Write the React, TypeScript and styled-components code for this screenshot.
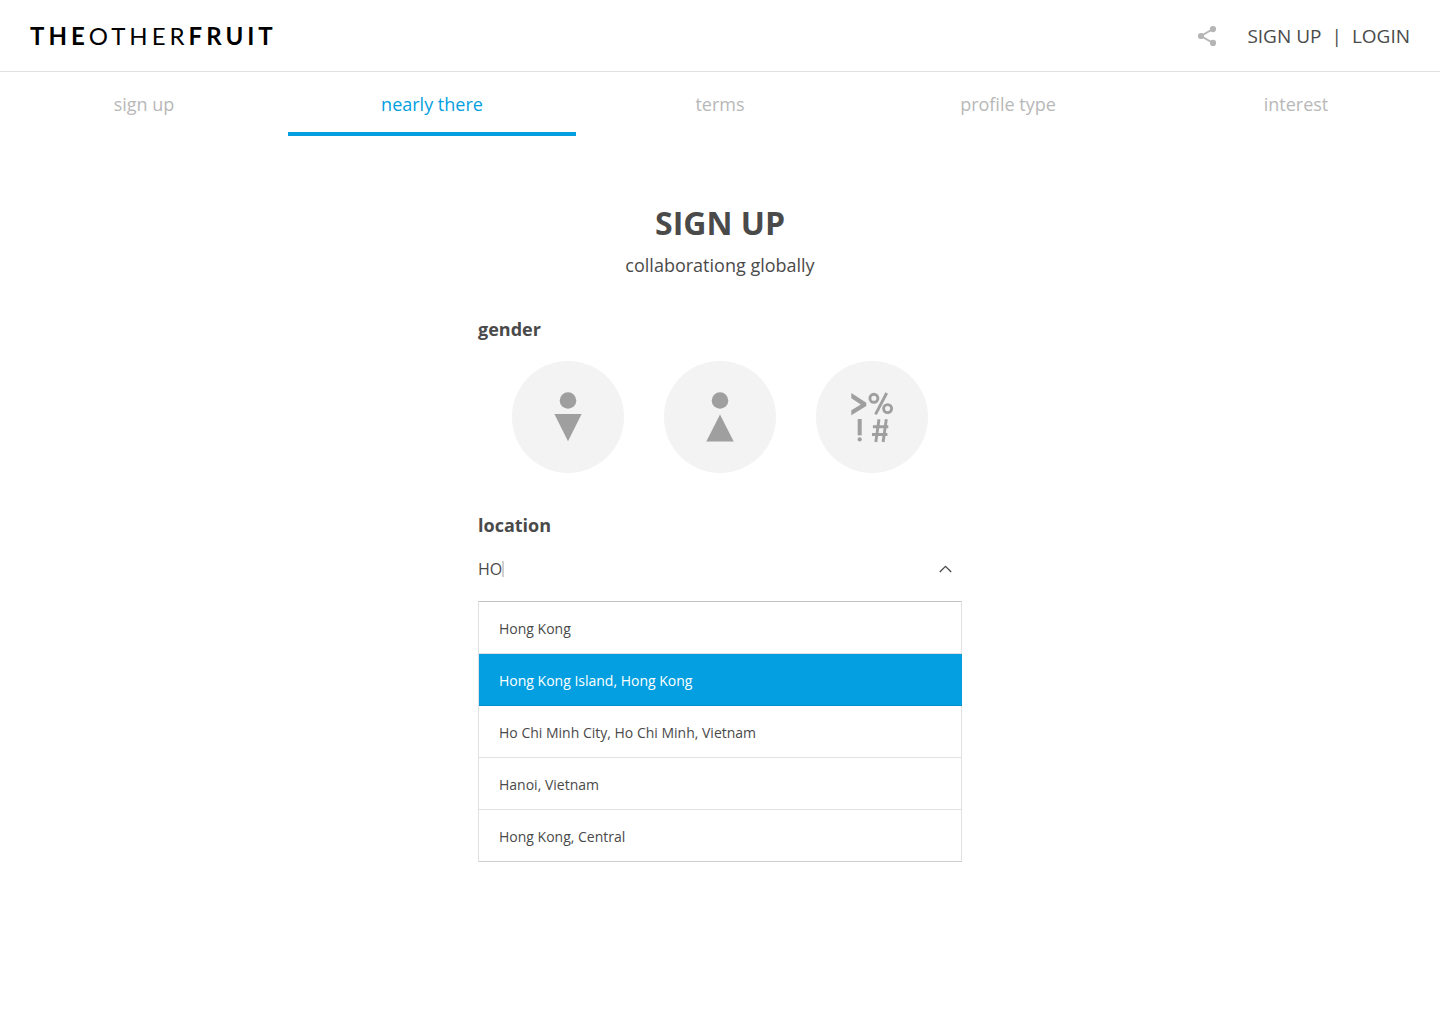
import React, { useState } from "react";
import styled, { createGlobalStyle, css } from "styled-components";

const color = {
  text: "#4a4a4a",
  muted: "#b8b8b8",
  accent: "#039fe1",
  line: "#e1e1e1",
  lineStrong: "#c2c2c2",
  disc: "#f3f3f3",
  glyph: "#9f9f9f",
};

const GlobalStyle = createGlobalStyle`
  * { box-sizing: border-box; }
  body {
    margin: 0;
    background: #fff;
    color: ${color.text};
    font-family: "Open Sans", "Noto Sans", sans-serif;
    font-size: 18px;
    line-height: 24px;
  }
`;

const Header = styled.header`
  display: flex;
  align-items: center;
  justify-content: space-between;
  height: 72px;
  padding: 0 30px;
  border-bottom: 1px solid ${color.line};
`;

const Logo = styled.a`
  color: #000;
  font-family: Lato, "Open Sans", sans-serif;
  font-size: 24px;
  font-weight: 400;
  letter-spacing: 4px;
  text-decoration: none;
`;

const LogoStrong = styled.span`
  font-weight: 700;
`;

const Account = styled.nav`
  display: flex;
  align-items: center;
  font-size: 19px;
`;

const ShareButton = styled.button`
  display: flex;
  margin: 0 30px 0 0;
  padding: 0;
  border: 0;
  background: none;
  cursor: pointer;
`;

const AccountLink = styled.a`
  color: ${color.text};
  text-decoration: none;
`;

const Divider = styled.span`
  padding: 0 10px;
`;

const Steps = styled.nav`
  display: grid;
  grid-template-columns: repeat(5, 1fr);
`;

const Step = styled.a<{ $active: boolean }>`
  height: 64px;
  padding-top: 20px;
  border-bottom: 4px solid ${(p) => (p.$active ? color.accent : "transparent")};
  color: ${(p) => (p.$active ? color.accent : color.muted)};
  text-align: center;
  text-decoration: none;
`;

const Form = styled.form`
  width: 100%;
  max-width: 484px;
  margin: 0 auto;
  padding: 64px 0;
`;

const Title = styled.h1`
  margin: 0;
  font-size: 32px;
  font-weight: 700;
  line-height: 45px;
  text-align: center;
`;

const Subtitle = styled.p`
  margin: 8px 0 40px;
  text-align: center;
`;

const heading = css`
  display: block;
  padding: 0;
  font-size: 18px;
  font-weight: 700;
  line-height: 24px;
`;

const Genders = styled.fieldset`
  margin: 0 0 40px;
  padding: 0;
  border: 0;
`;

const Legend = styled.legend`
  ${heading}
`;

const GenderRow = styled.div`
  display: flex;
  justify-content: center;
  gap: 40px;
  padding-top: 20px;
`;

const GenderOption = styled.label`
  display: grid;
  width: 112px;
  height: 112px;
  border-radius: 50%;
  background: ${color.disc};
  cursor: pointer;

  & > * {
    grid-area: 1 / 1;
  }

  &:has(:checked) {
    box-shadow: inset 0 0 0 2px ${color.accent};
  }
`;

const Radio = styled.input`
  width: 100%;
  height: 100%;
  margin: 0;
  appearance: none;
  border-radius: 50%;
  cursor: pointer;
`;

const GenderIcon = styled.svg`
  width: 112px;
  height: 112px;
  pointer-events: none;
`;

const LocationLabel = styled.label`
  ${heading}
`;

const Field = styled.div`
  display: flex;
  align-items: center;
  height: 64px;
  padding-right: 10px;
`;

const LocationInput = styled.input`
  field-sizing: content;
  min-width: 0;
  padding: 0;
  border: 0;
  outline: 0;
  background: none;
  color: ${color.text};
  font: 16px/24px "Open Sans", "Noto Sans", sans-serif;
`;

const Caret = styled.span`
  width: 2px;
  height: 16px;
  background: #d0d0d0;
`;

const ToggleButton = styled.button`
  display: flex;
  margin: 0 0 0 auto;
  padding: 0;
  border: 0;
  background: none;
  cursor: pointer;
`;

const Options = styled.ul`
  margin: 0;
  padding: 0;
  border: solid ${color.line};
  border-width: 1px 1px 0;
  border-top-color: ${color.lineStrong};
  list-style: none;
`;

const Option = styled.li<{ $active: boolean }>`
  height: 52px;
  margin-right: -1px;
  padding: 15px 20px 0;
  border-bottom: 1px solid ${(p) => (p.$active ? "#0490cb" : color.line)};
  background: ${(p) => (p.$active ? color.accent : "transparent")};
  color: ${(p) => (p.$active ? "#fff" : color.text)};
  font-size: 14px;
  cursor: pointer;

  &:last-child {
    border-bottom-color: #cdcdcd;
  }
`;

const steps = ["sign up", "nearly there", "terms", "profile type", "interest"];

const places = [
  "Hong Kong",
  "Hong Kong Island, Hong Kong",
  "Ho Chi Minh City, Ho Chi Minh, Vietnam",
  "Hanoi, Vietnam",
  "Hong Kong, Central",
];

const genders = [
  {
    name: "male",
    icon: (
      <g fill={color.glyph}>
        <circle cx="56" cy="39.5" r="8.3" />
        <path d="M42.4 53H69.6L56 80.3Z" />
      </g>
    ),
  },
  {
    name: "female",
    icon: (
      <g fill={color.glyph}>
        <circle cx="56" cy="39.5" r="8.3" />
        <path d="M56 53.5L69.7 80.6H42.3Z" />
      </g>
    ),
  },
  {
    name: "other",
    icon: (
      <g fill="none" stroke={color.glyph} strokeWidth="2.9">
        <path
          d="M35.3 32L50.3 41.8V45L35.3 54.3V49.2L44.8 43.4L35.3 37.2Z"
          fill={color.glyph}
          stroke="none"
        />
        <circle cx="57.9" cy="37.3" r="4" />
        <circle cx="71.6" cy="47.6" r="4" />
        <path d="M70.7 32L59.5 53.3" />
        <path d="M43.7 58V74.3" strokeWidth="4" />
        <circle cx="43.7" cy="78.4" r="2.1" fill={color.glyph} stroke="none" />
        <path d="M63 58.2L59.8 81M70.3 58.2L67.1 81M56.9 65.8H72.3M56 73.5H71.4" />
      </g>
    ),
  },
];

export default function App() {
  const [query, setQuery] = useState("HO");
  const [open, setOpen] = useState(true);
  const [active, setActive] = useState(1);

  return (
    <>
      <GlobalStyle />
      <Header>
        <Logo href="#home">
          <LogoStrong>THE</LogoStrong>OTHER<LogoStrong>FRUIT</LogoStrong>
        </Logo>
        <Account aria-label="Account">
          <ShareButton type="button" aria-label="Share">
            <svg width="20" height="20" viewBox="0 0 20 20" fill="#b5b5b5">
              <path d="M16 3L4 10L16 17" fill="none" stroke="#b5b5b5" strokeWidth="2" />
              <circle cx="4" cy="10" r="3.1" />
              <circle cx="16" cy="3.1" r="3.1" />
              <circle cx="16" cy="16.9" r="3.1" />
            </svg>
          </ShareButton>
          <AccountLink href="#signup">SIGN UP</AccountLink>
          <Divider>|</Divider>
          <AccountLink href="#login">LOGIN</AccountLink>
        </Account>
      </Header>

      <Steps aria-label="Progress">
        {steps.map((step, i) => (
          <Step key={step} href={`#step-${i + 1}`} $active={i === 1}>
            {step}
          </Step>
        ))}
      </Steps>

      <main>
        <Form>
          <Title>SIGN UP</Title>
          <Subtitle>collaborationg globally</Subtitle>

          <Genders>
            <Legend>gender</Legend>
            <GenderRow>
              {genders.map((g) => (
                <GenderOption key={g.name}>
                  <Radio type="radio" name="gender" value={g.name} aria-label={g.name} />
                  <GenderIcon viewBox="0 0 112 112" aria-hidden="true">
                    {g.icon}
                  </GenderIcon>
                </GenderOption>
              ))}
            </GenderRow>
          </Genders>

          <LocationLabel htmlFor="location">location</LocationLabel>
          <Field>
            <LocationInput
              id="location"
              role="combobox"
              aria-expanded={open}
              aria-controls="places"
              autoComplete="off"
              value={query}
              onChange={(e) => setQuery(e.target.value)}
            />
            <Caret />
            <ToggleButton
              type="button"
              aria-label="Toggle suggestions"
              onClick={() => setOpen(!open)}
            >
              <svg width="13" height="8" viewBox="0 0 13 8" fill="none" stroke={color.text}>
                <path d="M0.8 7L6.5 1.3L12.2 7" strokeWidth="1.3" />
              </svg>
            </ToggleButton>
          </Field>
          {open && (
            <Options id="places" role="listbox" aria-label="Suggestions">
              {places.map((place, i) => (
                <Option
                  key={place}
                  role="option"
                  aria-selected={i === active}
                  $active={i === active}
                  onMouseEnter={() => setActive(i)}
                  onClick={() => setQuery(place)}
                >
                  {place}
                </Option>
              ))}
            </Options>
          )}
        </Form>
      </main>
    </>
  );
}
